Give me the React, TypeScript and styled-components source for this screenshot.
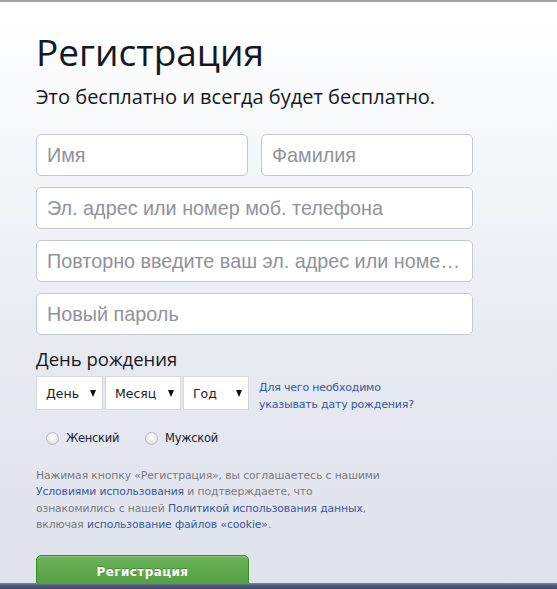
import React from "react";
import styled, { createGlobalStyle } from "styled-components";

const GlobalStyle = createGlobalStyle`
    html, body {
        margin: 0;
        padding: 0;
        height: 100%;
    }
    body {
        font-family: "Liberation Sans", Arial, sans-serif;
        overflow: hidden;
    }
`;

const Page = styled.div`
    position: relative;
    height: 589px;
    box-sizing: border-box;
    border-top: 2px solid #a0a0a0;
    background: linear-gradient(to bottom, #ffffff 0%, #f6f7fa 25%, #e8eaf2 60%, #e0e2ec 100%);
    overflow: hidden;
`;

const Form = styled.div`
    width: 437px;
    padding: 28px 0 0 36px;
    display: flex;
    flex-direction: column;
`;

const Title = styled.h1`
    margin: 0;
    font-family: "Open Sans", sans-serif;
    font-weight: 400;
    font-size: 37px;
    line-height: 44px;
    color: #141823;
`;

const Subtitle = styled.p`
    margin: 10px 0 0;
    font-family: "Open Sans", sans-serif;
    font-size: 20px;
    line-height: 26px;
    color: #141823;
`;

const Fields = styled.div`
    margin-top: 24px;
    display: flex;
    flex-direction: column;
    gap: 11px;
`;

const NameRow = styled.div`
    display: grid;
    grid-template-columns: 1fr 1fr;
    gap: 13px;
`;

const Input = styled.input`
    box-sizing: border-box;
    width: 100%;
    height: 42px;
    padding: 0 11px 0 10px;
    border: 1px solid #c4c8d0;
    border-radius: 5px;
    background: #fff;
    font-family: "Liberation Sans", Arial, sans-serif;
    font-size: 19.8px;
    color: #1d2129;
    outline: none;
    text-overflow: ellipsis;

    &::placeholder {
        color: #909399;
    }
`;

const SectionLabel = styled.div`
    margin-top: 12px;
    font-family: "Open Sans", sans-serif;
    font-size: 18.5px;
    line-height: 24px;
    color: #141823;
`;

const BirthRow = styled.div`
    margin-top: 5px;
    display: flex;
    align-items: flex-start;
`;

const Selects = styled.div`
    display: flex;
    gap: 2px;
`;

const Select = styled.div<{ $w: number }>`
    box-sizing: border-box;
    width: ${p => p.$w}px;
    height: 34px;
    padding: 0 6px 0 9px;
    display: flex;
    align-items: center;
    justify-content: space-between;
    background: #fff;
    border: 1px solid #d4d7de;
    font-family: "DejaVu Sans", Tahoma, sans-serif;
    font-size: 12.5px;
    color: #1d2129;
`;

const Arrow = styled.span`
    width: 0;
    height: 0;
    border-left: 3.5px solid transparent;
    border-right: 3.5px solid transparent;
    border-top: 7px solid #111;
`;

const Why = styled.a`
    margin: 3px 0 0 10px;
    width: 175px;
    font-family: "DejaVu Sans", Tahoma, sans-serif;
    font-size: 11px;
    line-height: 17px;
    color: #385898;
    text-decoration: none;
    letter-spacing: -0.2px;
`;

const Genders = styled.div`
    margin-top: 18px;
    padding-left: 10px;
    display: flex;
    gap: 26px;
`;

const Gender = styled.label`
    display: flex;
    align-items: center;
    gap: 7px;
    font-family: "DejaVu Sans", Tahoma, sans-serif;
    font-size: 11.5px;
    color: #1d2129;
    letter-spacing: -0.3px;
`;

const Radio = styled.span`
    width: 11px;
    height: 11px;
    border-radius: 50%;
    border: 1px solid #b8bcc4;
    background: radial-gradient(circle at 50% 40%, #ffffff 0%, #e6e8ec 60%, #c9ccd3 100%);
`;

const Terms = styled.p`
    margin: 23px 0 0;
    font-family: "DejaVu Sans", Tahoma, sans-serif;
    font-size: 10.8px;
    line-height: 16.3px;
    color: #777a80;
    letter-spacing: -0.1px;
    white-space: nowrap;
`;

const TermsLink = styled.a`
    color: #385898;
    text-decoration: none;
`;

const Submit = styled.button`
    margin-top: 22px;
    width: 213px;
    height: 40px;
    padding-bottom: 8px;
    border: 1px solid #3b8a2f;
    border-radius: 5px 5px 0 0;
    background: linear-gradient(to bottom, #6db35a 0%, #5ba64a 50%, #4c9a3c 100%);
    box-shadow: inset 0 1px 0 #8cc97b;
    font-family: "DejaVu Sans", Tahoma, sans-serif;
    font-size: 12px;
    font-weight: 700;
    letter-spacing: 0.4px;
    color: #fff;
    text-shadow: 0 -1px 0 rgba(0, 0, 0, 0.25);
`;

const Taskbar = styled.div`
    position: absolute;
    left: 0;
    right: 0;
    bottom: 0;
    height: 6px;
    background: linear-gradient(to bottom, #7d8aa3 0%, #4c5c78 40%, #3d4b66 100%);
`;

export default function App() {
    return (
        <>
            <GlobalStyle />
            <Page>
                <Form>
                    <Title>Регистрация</Title>
                    <Subtitle>Это бесплатно и всегда будет бесплатно.</Subtitle>
                    <Fields>
                        <NameRow>
                            <Input placeholder="Имя" />
                            <Input placeholder="Фамилия" />
                        </NameRow>
                        <Input placeholder="Эл. адрес или номер моб. телефона" />
                        <Input placeholder="Повторно введите ваш эл. адрес или номер моб. телефона" />
                        <Input placeholder="Новый пароль" />
                    </Fields>
                    <SectionLabel>День рождения</SectionLabel>
                    <BirthRow>
                        <Selects>
                            <Select $w={67}>День<Arrow /></Select>
                            <Select $w={76}>Месяц<Arrow /></Select>
                            <Select $w={66}>Год<Arrow /></Select>
                        </Selects>
                        <Why href="#">Для чего необходимо указывать дату рождения?</Why>
                    </BirthRow>
                    <Genders>
                        <Gender><Radio />Женский</Gender>
                        <Gender><Radio />Мужской</Gender>
                    </Genders>
                    <Terms>
                        Нажимая кнопку «Регистрация», вы соглашаетесь с нашими
                        <br />
                        <TermsLink href="#">Условиями использования</TermsLink> и подтверждаете, что
                        <br />
                        ознакомились с нашей <TermsLink href="#">Политикой использования данных</TermsLink>,
                        <br />
                        включая <TermsLink href="#">использование файлов «cookie»</TermsLink>.
                    </Terms>
                    <Submit>Регистрация</Submit>
                </Form>
                <Taskbar />
            </Page>
        </>
    );
}
